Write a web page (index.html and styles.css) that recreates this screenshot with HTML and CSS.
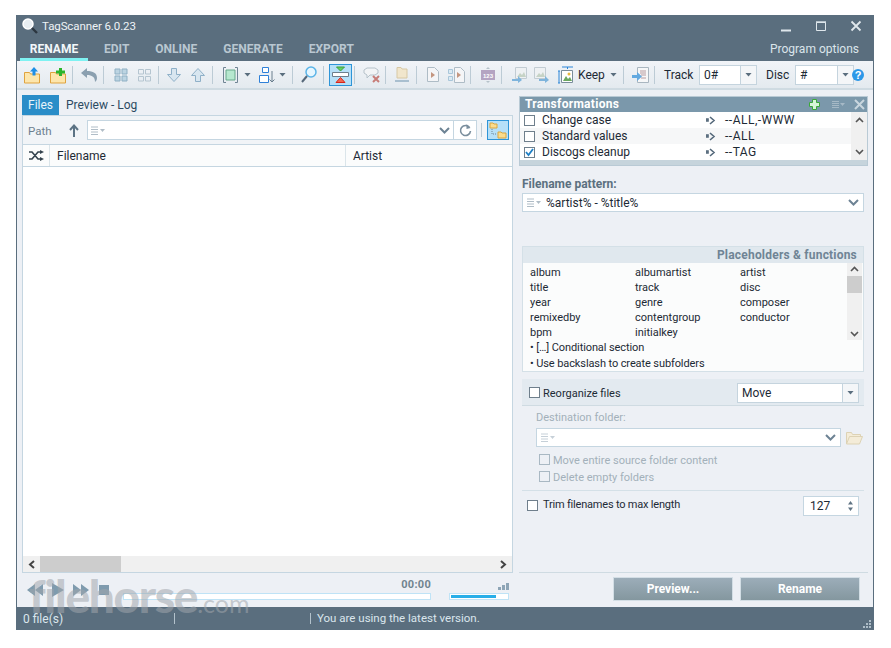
FILE: index.html
```html
<!DOCTYPE html>
<html lang="en">
<head>
<meta charset="utf-8">
<title>TagScanner 6.0.23</title>
<link rel="stylesheet" href="styles.css">
</head>
<body>
<div class="window">
  <header class="head">
    <div class="titlebar">
      <svg class="logo" width="22" height="20" viewBox="0 0 22 20"><circle cx="8" cy="8" r="5" fill="#e8eef2" stroke="#fff" stroke-width="1.5"/><path d="M12 12l5 5" stroke="#2b3640" stroke-width="2.4"/></svg>
      <span class="apptitle">TagScanner 6.0.23</span>
      <div class="winctl">
        <svg width="12" height="12" viewBox="0 0 12 12"><path d="M1 10.5h10" stroke="#dfe7ec" stroke-width="2"/></svg>
        <svg width="12" height="12" viewBox="0 0 12 12"><path d="M1.5 2.5h9v8h-9z" fill="none" stroke="#dfe7ec"/><path d="M1 2h10" stroke="#dfe7ec" stroke-width="1.4"/></svg>
        <svg width="12" height="12" viewBox="0 0 12 12"><path d="M1.5 1.5l9 9m0-9l-9 9" stroke="#dfe7ec" stroke-width="1.8"/></svg>
      </div>
    </div>
    <nav class="tabs">
      <span class="tab active">RENAME</span>
      <span class="tab">EDIT</span>
      <span class="tab">ONLINE</span>
      <span class="tab">GENERATE</span>
      <span class="tab">EXPORT</span>
      <span class="options">Program options</span>
    </nav>
  </header>

  <div class="toolbar">
    <svg class="m0" width="16" height="18" viewBox="0 0 16 18"><path d="M.5 6.5h5l1 1.500h9v9h-15z" fill="#fde6ac" stroke="#dfa33e"/><path d="M10 1l4 4.500h-2.500v4h-3v-4H6z" fill="#1f8fe6"/></svg>
    <svg class="m10" width="16" height="18" viewBox="0 0 16 18"><path d="M.5 6.500h5l1 1.500h9v9h-15z" fill="#fde6ac" stroke="#dfa33e"/><path d="M9 2h3v2.500h3v3h-3v2.500H9V7.500H6v-3h3z" fill="#2cb52c"/></svg>
    <i class="sep m6"></i>
    <svg class="m8" width="16" height="16" viewBox="0 0 16 16"><path d="M0 6l6-5v3c6 0 10 2 10 7 0 2-1 3-2 4 0-5-3-7-8-7v3z" fill="#8ba0b0"/></svg>
    <i class="sep m6"></i>
    <svg class="m10" width="14" height="14" viewBox="0 0 14 14"><path d="M1 1h5v5H1zM8 1h5v5H8zM1 8h5v5H1zM8 8h5v5H8z" fill="#bcd4e2" stroke="#8fb0c4"/></svg>
    <svg class="m10" width="13" height="14" viewBox="0 0 13 14"><path d="M.5 1.500h5v4.500h-5zM7.500 1.500h5v4.500h-5zM.5 8.500h5v4.500h-5zM7.500 8.500h5v4.500h-5z" fill="none" stroke="#b5c5d0"/></svg>
    <i class="sep m7"></i>
    <svg class="m8" width="14" height="14" viewBox="0 0 14 14"><path d="M4.500.5h5v6h4L7 13.500.5 6.500h4z" fill="#d8e6f0" stroke="#8fb0c8"/></svg>
    <svg class="m10" width="14" height="14" viewBox="0 0 14 14"><path d="M4.500 13.500h5v-6h4L7 .5.500 7.500h4z" fill="#d8e6f0" stroke="#8fb0c8"/></svg>
    <i class="sep m7"></i>
    <svg class="m10" width="15" height="16" viewBox="0 0 15 16"><path d="M3 .5H.5v15H3M12 .5h2.500v15H12" fill="none" stroke="#708494"/><path d="M3 3h9v10H3z" fill="#b6e8cf" stroke="#68a88c"/></svg>
    <i class="caret m6"></i>
    <svg class="m8" width="16" height="18" viewBox="0 0 16 18"><path d="M3.500 1.500h6v5h-6zM.5 9.500h9v7h-9z" fill="#fff" stroke="#2f80d8"/><path d="M13 5v11m-2.500-2.500L13 16l2.500-2.500" fill="none" stroke="#6a7e8e"/></svg>
    <i class="caret m4"></i>
    <i class="sep m6"></i>
    <svg class="m8" width="16" height="17" viewBox="0 0 16 17"><circle cx="10" cy="6" r="5" fill="#e6f6ff" stroke="#5ab4e8" stroke-width="1.500"/><path d="M6 10l-5 6" stroke="#56687a" stroke-width="2"/></svg>
    <i class="sep m6"></i>
    <span class="tbactive m5"><svg width="17" height="18" viewBox="0 0 17 18"><path d="M4.500 1h8l-4 4z" fill="#63d35f" stroke="#3e9d3c"/><path d="M.5 6.500h16v4h-16z" fill="#fff" stroke="#6d7f8d"/><path d="M8.500 11.500l4.500 5H4z" fill="#f06a55" stroke="#d8251a"/></svg></span>
    <i class="sep m2"></i>
    <svg class="m8" width="17" height="16" viewBox="0 0 17 16"><path d="M1 3l3-2h8l3 2v3l-3 2H7l-3 3V8L1 6z" fill="#f2f4f6" stroke="#b6c2ca"/><path d="M10 9l6 6m0-6l-6 6" stroke="#c77d78" stroke-width="2"/></svg>
    <i class="sep m5"></i>
    <svg class="m8" width="16" height="17" viewBox="0 0 16 17"><path d="M3 1.500h4l1 1.500h5v9H3z" fill="#f1e6cc" stroke="#d7c8a4"/><path d="M1 15h14" stroke="#a9bfcf" stroke-width="2"/></svg>
    <i class="sep m6"></i>
    <svg class="m10" width="12" height="15" viewBox="0 0 12 15"><path d="M.5.500h7l4 4v10h-11z" fill="#f4f5f7" stroke="#aebcc6"/><path d="M4 5l4 3-4 3z" fill="#c49680"/></svg>
    <svg class="m9" width="17" height="16" viewBox="0 0 17 16"><path d="M.5 2.500h4v4h-4zM.5 9.500h4v4h-4z" fill="#dbeaf3" stroke="#a9c6da"/><path d="M6.500.500h6l4 4v11h-10z" fill="#f4f5f7" stroke="#aebcc6"/><path d="M9 5l4 3-4 3z" fill="#c49680"/></svg>
    <i class="sep m5"></i>
    <svg class="m9" width="16" height="16" viewBox="0 0 16 16"><path d="M1 3h14v10H1z" fill="#b4a4c2"/><path d="M8 0l2 2H6zM8 16l-2-2h4z" fill="#b6c2ca"/><text class="num" x="8" y="10.500">123</text></svg>
    <i class="sep m5"></i>
    <svg class="m10" width="15" height="16" viewBox="0 0 15 16"><path d="M3.500.5h11v11h-11z" fill="#eef1f3" stroke="#c2ccd3"/><path d="M5 10l3-4 2 2 2-3 2 5z" fill="#c6d3c6"/><path d="M0 12h6V9l4 4-4 3v-2H0z" fill="#7eb4dc"/></svg>
    <svg class="m7" width="15" height="16" viewBox="0 0 15 16"><path d="M.5.5h11v11H.5z" fill="#eef1f3" stroke="#c2ccd3"/><path d="M2 10l3-4 2 2 2-3 2 5z" fill="#c6d3c6"/><path d="M5 12h6V9l4 4-4 3v-2H5z" fill="#7eb4dc"/></svg>
    <svg class="m9" width="15" height="18" viewBox="0 0 15 18"><path d="M4 1h11M9.500 1v2M1 5v12M0 5h2M0 17h2" fill="none" stroke="#2c86d8"/><path d="M3.500 4.500h11v12h-11z" fill="#fff" stroke="#7a8d9b"/><path d="M5 15l3-5 2 3 2-2 2 4z" fill="#6ba860"/><circle cx="11" cy="8" r="1.500" fill="#e8b840"/></svg>
    <span class="tbtext keep m5">Keep</span>
    <i class="caret m6"></i>
    <i class="sep m6"></i>
    <svg class="m8" width="17" height="16" viewBox="0 0 17 16"><path d="M5.500.500h11v15h-11z" fill="#f6f7f8" stroke="#a9b6c0"/><path d="M8 4h6M8 6h6M9 8h5M9 11h5" stroke="#b89ca0"/><path d="M0 8h5V5l5 4.500L5 14v-3H0z" fill="#62a9e0"/></svg>
    <i class="sep m5"></i>
    <span class="tbtext tracklabel m9">Track</span>
    <span class="combo track m7"><span class="cbval">0#</span><span class="cbbtn"><i class="caret"></i></span></span>
    <span class="tbtext disclabel m9">Disc</span>
    <span class="combo disc m7"><span class="cbval">#</span><span class="cbbtn"><i class="caret"></i></span></span>
    <svg class="help" width="12" height="14" viewBox="0 0 12 14"><circle cx="6" cy="7" r="6" fill="#2c98e8"/><text class="q" x="6" y="11">?</text></svg>
  </div>

  <main class="main">
    <section class="left">
      <div class="ltabs"><span class="ltab on">Files</span><span class="ltab">Preview - Log</span></div>
      <div class="filepanel">
        <div class="pathrow">
          <span class="pathlabel">Path</span>
          <svg class="uparrow" width="10" height="13" viewBox="0 0 10 13"><path d="M5 13V2M1 6l4-4.500L9 6" fill="none" stroke="#5c7384" stroke-width="2"/></svg>
          <div class="pathinput">
            <svg class="listic" width="15" height="9" viewBox="0 0 15 9"><path d="M0 1h7M0 3.500h7M0 6h7M0 8.500h7" stroke="#b0bdc7"/><path d="M9 3h5l-2.500 3z" fill="#b0bdc7"/></svg>
            <span class="grow"></span>
            <svg class="chev" width="11" height="7" viewBox="0 0 11 7"><path d="M1 1l4.500 4.500L10 1" fill="none" stroke="#6d8394" stroke-width="2"/></svg>
            <span class="refresh"><svg width="13" height="13" viewBox="0 0 13 13"><path d="M10.500 3.500a5 5 0 1 0 1 3.500" fill="none" stroke="#7a8e9d" stroke-width="1.600"/><path d="M7.500 0v5l4-1z" fill="#7a8e9d"/></svg></span>
          </div>
          <i class="sep pathsep"></i>
          <span class="foldertoggle"><svg width="18" height="17" viewBox="0 0 18 17"><path d="M1 1h3l1 1h3v4H1zM9 10h3l1 1h4v5H9z" fill="#fbdc8d" stroke="#d9a63e"/><path d="M3 7v5h5" fill="none" stroke="#6c8494" stroke-dasharray="1 1"/></svg></span>
        </div>
        <div class="colhead">
          <span class="colshuffle"><svg width="15" height="11" viewBox="0 0 15 11"><path d="M0 2h3l6 7h3M0 9h3l6-7h3" fill="none" stroke="#34434e" stroke-width="1.600"/><path d="M11 0l4 2-4 2zM11 7l4 2-4 2z" fill="#34434e"/></svg></span>
          <span class="colname">Filename</span>
          <span class="colartist">Artist</span>
        </div>
        <div class="filelist"></div>
        <div class="hscroll">
          <span class="sbtn"><svg width="7" height="9" viewBox="0 0 7 9"><path d="M6 1L2 4.500 6 8" fill="none" stroke="#444" stroke-width="2"/></svg></span>
          <span class="thumb"></span>
          <span class="grow"></span>
          <span class="sbtn"><svg width="7" height="9" viewBox="0 0 7 9"><path d="M1 1l4 3.500L1 8" fill="none" stroke="#444" stroke-width="2"/></svg></span>
        </div>
      </div>
      <div class="player">
        <div class="transport">
          <svg width="16" height="12" viewBox="0 0 16 12"><path d="M8 0v12L0 6zM16 0v12L8 6z" fill="#7f9bae"/></svg>
          <svg class="t1" width="12" height="14" viewBox="0 0 12 14"><path d="M0 0l12 7-12 7z" fill="#7f9bae"/></svg>
          <svg class="t2" width="16" height="12" viewBox="0 0 16 12"><path d="M0 0l8 6-8 6zM8 0l8 6-8 6z" fill="#7f9bae"/></svg>
          <svg class="t3" width="10" height="10" viewBox="0 0 10 10"><path d="M0 0h10v10H0z" fill="#7f9bae"/></svg>
        </div>
        <div class="trackbox">
          <span class="time">00:00</span>
          <span class="seek"></span>
        </div>
        <div class="volbox">
          <svg class="signal" width="11" height="7" viewBox="0 0 11 7"><path d="M0 4h3v3H0zM4 2h3v5H4zM8 0h3v7H8z" fill="#8ea5b6"/></svg>
          <span class="vol"><span class="volfill"></span></span>
        </div>
      </div>
    </section>

    <section class="right">
      <div class="transform">
        <div class="trhead">
          <span class="trtitle">Transformations</span>
          <svg class="plus" width="11" height="11" viewBox="0 0 11 11"><path d="M3.500.5h4v3h3v4h-3v3h-4v-3h-3v-4h3z" fill="#d8f5d8" stroke="#3aa83a"/></svg>
          <svg class="trlist" width="13" height="8" viewBox="0 0 13 8"><path d="M0 .5h7M0 2.500h7M0 4.500h7M0 6.500h7" stroke="#a6b9c6"/><path d="M8 2h5l-2.500 3z" fill="#a6b9c6"/></svg>
          <svg class="trx" width="11" height="11" viewBox="0 0 11 11"><path d="M1 1l9 9m0-9l-9 9" stroke="#c9d6de" stroke-width="2"/></svg>
        </div>
        <div class="trbody">
          <div class="trrows">
            <div class="trrow"><i class="check"></i><span class="trname">Change case</span><svg class="go" width="10" height="9" viewBox="0 0 10 9"><path d="M0 3h2v2H0zM4 1l4 3.500L4 8" fill="none" stroke="#54687a" stroke-width="1.600"/></svg><span class="trval">--ALL,-WWW</span></div>
            <div class="trrow alt"><i class="check"></i><span class="trname">Standard values</span><svg class="go" width="10" height="9" viewBox="0 0 10 9"><path d="M0 3h2v2H0zM4 1l4 3.500L4 8" fill="none" stroke="#54687a" stroke-width="1.600"/></svg><span class="trval">--ALL</span></div>
            <div class="trrow"><i class="check"><svg width="11" height="11" viewBox="0 0 11 11"><path d="M2 5l2.500 3L9 2" fill="none" stroke="#1f7fc4" stroke-width="1.800"/></svg></i><span class="trname">Discogs cleanup</span><svg class="go" width="10" height="9" viewBox="0 0 10 9"><path d="M0 3h2v2H0zM4 1l4 3.500L4 8" fill="none" stroke="#54687a" stroke-width="1.600"/></svg><span class="trval">--TAG</span></div>
          </div>
          <div class="vscroll short">
            <svg width="9" height="7" viewBox="0 0 9 7"><path d="M1 5l3.500-3.500L8 5" fill="none" stroke="#555" stroke-width="1.600"/></svg>
            <svg width="9" height="7" viewBox="0 0 9 7"><path d="M1 2l3.500 3.500L8 2" fill="none" stroke="#555" stroke-width="1.600"/></svg>
          </div>
        </div>
        <div class="trfoot"></div>
      </div>

      <label class="fplabel">Filename pattern:</label>
      <div class="pattern">
        <svg class="listic" width="15" height="9" viewBox="0 0 15 9"><path d="M0 1h7M0 3.500h7M0 6h7M0 8.500h7" stroke="#b0bdc7"/><path d="M9 3h5l-2.500 3z" fill="#b0bdc7"/></svg>
        <span class="grow patval">%artist% - %title%</span>
        <svg width="11" height="7" viewBox="0 0 11 7"><path d="M1 1l4.500 4.500L10 1" fill="none" stroke="#6d8394" stroke-width="2"/></svg>
      </div>

      <div class="places">
        <div class="plhead">Placeholders &amp; functions</div>
        <div class="plbody">
          <div class="plgrid">
            <span>album</span><span>albumartist</span><span>artist</span>
            <span>title</span><span>track</span><span>disc</span>
            <span>year</span><span>genre</span><span>composer</span>
            <span>remixedby</span><span>contentgroup</span><span>conductor</span>
            <span>bpm</span><span>initialkey</span><span></span>
          </div>
          <div class="vscroll tall">
            <svg width="9" height="7" viewBox="0 0 9 7"><path d="M1 5l3.500-3.500L8 5" fill="none" stroke="#555" stroke-width="1.600"/></svg>
            <span class="vthumb"></span>
            <span class="grow"></span>
            <svg width="9" height="7" viewBox="0 0 9 7"><path d="M1 2l3.500 3.500L8 2" fill="none" stroke="#555" stroke-width="1.600"/></svg>
          </div>
        </div>
        <div class="note">• […] Conditional section</div>
        <div class="note">• Use backslash to create subfolders</div>
      </div>

      <div class="reorg">
        <i class="check"></i><span class="grow reorgtext">Reorganize files</span>
        <span class="combo move"><span class="cbval">Move</span><span class="cbbtn"><i class="caret"></i></span></span>
      </div>
      <div class="dest">
        <div class="destlabel">Destination folder:</div>
        <div class="destrow">
          <div class="destinput">
            <svg width="15" height="9" viewBox="0 0 15 9"><path d="M0 1h7M0 3.500h7M0 6h7M0 8.500h7" stroke="#c6d0d8"/><path d="M9 3h5l-2.500 3z" fill="#c6d0d8"/></svg>
            <span class="grow"></span>
            <svg width="11" height="7" viewBox="0 0 11 7"><path d="M1 1l4.500 4.500L10 1" fill="none" stroke="#6d8394" stroke-width="2"/></svg>
          </div>
          <svg class="destfolder" width="17" height="14" viewBox="0 0 17 14"><path d="M.5 13V1.500h5l1 2h8v2" fill="#f4ecd8" stroke="#ddd2b4"/><path d="M.5 13l3-7.500h13l-3 7.500z" fill="#f4ecd8" stroke="#ddd2b4"/></svg>
        </div>
        <div class="destopt o1"><i class="check dim"></i><span>Move entire source folder content</span></div>
        <div class="destopt o2"><i class="check dim"></i><span>Delete empty folders</span></div>
      </div>
      <div class="trim">
        <i class="check"></i><span class="grow trimtext">Trim filenames to max length</span>
        <span class="spin"><span class="grow">127</span><svg width="7" height="12" viewBox="0 0 7 12"><path d="M3.500 1L6 4.500H1zM3.500 11L1 7.500h5z" fill="#5f7383"/></svg></span>
      </div>
      <div class="grow"></div>
      <div class="actions">
        <span class="action">Preview...</span>
        <span class="action">Rename</span>
      </div>
    </section>
  </main>

  <footer class="status">
    <span class="st1">0 file(s)</span>
    <span class="st2"></span>
    <span class="st3">You are using the latest version.</span>
    <svg class="grip" width="9" height="9" viewBox="0 0 9 9"><path d="M7 0h2v2H7zM4 3h2v2H4zM7 3h2v2H7zM1 6h2v2H1zM4 6h2v2H4zM7 6h2v2H7z" fill="#aebdc8"/></svg>
  </footer>

  <div class="watermark">filehorse<small>.com</small></div>
</div>
</body>
</html>
```
FILE: styles.css
```css
* { box-sizing: border-box; }
html, body { margin: 0; padding: 0; background: #fff; }
body { padding: 15px 17px 18px 16px; font: 12px/16px Roboto, "Noto Sans", sans-serif; color: #1d2a35; }
svg { display: block; flex: none; }
i { font-style: normal; display: block; flex: none; }
.grow { flex: 1 1 0; min-width: 0; }

.window { position: relative; width: 858px; height: 615px; display: flex; flex-direction: column; background: #edf0f5; border-left: 1px solid #5a6e7e; border-right: 1px solid #5a6e7e; overflow: hidden; }

.head { background: #5a6e7e; color: #fff; height: 46px; flex: none; }
.titlebar { display: flex; align-items: center; height: 22px; padding-left: 3px; }
.apptitle { color: #eef3f6; font-size: 11.500px; letter-spacing: -0.1px; }
.winctl { margin-left: auto; display: flex; gap: 23px; padding-right: 11px; }
.tabs { display: flex; height: 24px; position: relative; }
.tab { font-weight: 700; color: #b9c7d1; padding: 4px 0 0; margin-left: 26px; }
.tab.active { color: #f2f7fa; margin-left: 3px; padding: 4px 0 0; border-bottom: 3px solid #7ff2f2; width: 68px; text-align: center; }
.tab.active + .tab { margin-left: 16px; }
.options { margin-left: auto; margin-right: 14px; color: #dbe5eb; padding-top: 4px; }

.toolbar { height: 29px; flex: none; display: flex; align-items: center; padding-left: 7px; background: linear-gradient(#f1f4f8, #e4eaef); border-bottom: 2px solid #cfdbe2; }
.sep { width: 1px; height: 18px; background: #bccbd5; }
.m0 { margin-left: 0; } .m2 { margin-left: 2px; } .m4 { margin-left: 4px; } .m5 { margin-left: 5px; } .m6 { margin-left: 6px; } .m7 { margin-left: 7px; } .m8 { margin-left: 8px; } .m9 { margin-left: 9px; } .m10 { margin-left: 10px; }
.caret { width: 7px; height: 4px; background: #5a6e7e; clip-path: polygon(0 0, 100% 0, 50% 100%); }
.tbactive { width: 23px; height: 22px; background: #b6e0f8; border: 1px solid #2e95d8; display: flex; align-items: center; justify-content: center; flex: none; }
.tbtext { flex: none; color: #1d2a35; }
.keep { width: 26px; }
.tracklabel { width: 28px; }
.disclabel { width: 22px; }
.num { font: 700 6px "Liberation Sans", sans-serif; fill: #fff; text-anchor: middle; }
.q { font: 700 11px "Liberation Sans", sans-serif; fill: #fff; text-anchor: middle; }
.combo { display: flex; height: 20px; background: #fff; border: 1px solid #c5d4de; flex: none; }
.cbval { flex: 1; padding-left: 4px; line-height: 18px; }
.cbbtn { width: 16px; border-left: 1px solid #c5d4de; background: #f4f6f8; display: flex; align-items: center; justify-content: center; }
.track { width: 58px; }
.disc { width: 59px; }
.move { width: 122px; }
.help { margin-left: -2px; position: relative; }

.main { flex: 1; display: flex; min-height: 0; }
.left { width: 491px; margin-left: 5px; padding-top: 5px; display: flex; flex-direction: column; flex: none; }
.ltabs { display: flex; height: 20px; flex: none; }
.ltab { padding: 2px 7px 0; color: #2c4a62; }
.ltab.on { background: #2a8dc8; color: #e8f4fb; padding: 2px 6px 0; }
.filepanel { flex: 1; display: flex; flex-direction: column; border: 1px solid #c5d6e1; min-height: 0; }
.pathrow { height: 29px; display: flex; align-items: center; background: #f1f4f7; border-bottom: 1px solid #c5d6e1; padding-left: 5px; flex: none; }
.pathlabel { color: #6c808f; width: 41px; font-size: 11.500px; padding-top: 1px; }
.uparrow { margin-right: 8px; }
.pathinput { width: 390px; height: 20px; display: flex; align-items: center; background: #fff; border: 1px solid #c5d6e1; padding-left: 3px; }
.chev { margin-right: 3px; }
.refresh { width: 23px; height: 18px; border-left: 1px solid #c5d6e1; display: flex; align-items: center; justify-content: center; }
.pathsep { margin-left: 4px; height: 14px; }
.foldertoggle { width: 22px; height: 20px; margin-left: 5px; background: #b6e0f8; border: 1px solid #2e95d8; display: flex; align-items: center; justify-content: center; }
.colhead { height: 22px; flex: none; display: flex; align-items: center; background: #fbfcfc; border-bottom: 1px solid #c5d6e1; }
.colshuffle { width: 27px; height: 21px; border-right: 1px solid #dbe5ea; display: flex; align-items: center; justify-content: center; }
.colname { width: 296px; padding-left: 7px; height: 21px; line-height: 22px; border-right: 1px solid #dbe5ea; }
.colartist { padding-left: 7px; }
.filelist { flex: 1; background: #fff; }
.hscroll { height: 16px; flex: none; display: flex; background: #f0f0f0; align-items: stretch; }
.sbtn { width: 17px; display: flex; align-items: center; justify-content: center; }
.thumb { width: 81px; background: #cdcdcd; }

.player { height: 34px; flex: none; display: flex; position: relative; }
.transport { display: flex; align-items: center; padding-left: 5px; height: 34px; width: 101px; }
.t1 { margin-left: 9px; }
.t2 { margin-left: 9px; }
.t3 { margin-left: 10px; }
.trackbox { width: 308px; display: flex; flex-direction: column; align-items: flex-end; padding-top: 5px; }
.time { font-weight: 700; font-size: 11px; line-height: 14px; letter-spacing: 0.3px; color: #71848f; }
.seek { display: block; width: 100%; height: 7px; margin-top: 1px; background: #fff; border: 1px solid #bfe3f6; }
.volbox { width: 60px; margin-left: 18px; display: flex; flex-direction: column; align-items: flex-end; padding-top: 10px; }
.signal { margin-bottom: 3px; }
.vol { display: block; width: 100%; height: 7px; background: #fff; border: 1px solid #bfe3f6; padding: 1px; }
.volfill { display: block; width: 45px; height: 3px; background: #27aee8; }

.right { width: 349px; margin-left: 6px; flex: none; display: flex; flex-direction: column; padding-top: 6px; }
.transform { height: 70px; flex: none; border: 1px solid #b9cad5; display: flex; flex-direction: column; background: #c6d4dc; }
.trhead { height: 15px; background: #7b98ab; color: #fff; display: flex; align-items: center; padding-left: 5px; flex: none; }
.trtitle { font-weight: 700; flex: 1; letter-spacing: 0.3px; margin-top: -1px; }
.plus { margin-right: 12px; }
.trlist { margin-right: 9px; }
.trx { margin-right: 2px; }
.trbody { display: flex; height: 48px; background: #fff; flex: none; }
.trrows { flex: 1; }
.trrow { height: 16px; display: flex; align-items: center; padding-left: 4px; background: #fff; }
.trrow.alt { background: #f6f7f8; }
.trname { width: 164px; margin-left: 7px; }
.trval { letter-spacing: 0.5px; }
.go { margin-right: 9px; }
.check { width: 11px; height: 11px; background: #fff; border: 1px solid #6f7f8c; }
.check svg { margin: -1px; }
.check.dim { border-color: #a9b8c3; background: transparent; }
.vscroll { width: 16px; background: #f0f0f0; display: flex; flex-direction: column; align-items: center; justify-content: space-between; padding: 5px 0; flex: none; }
.trfoot { flex: 1; }

.fplabel { margin: 10px 0 0 3px; font-weight: 700; color: #5c7080; height: 16px; display: block; }
.pattern { margin: 1px 4px 0 3px; height: 19px; background: #fff; border: 1px solid #c5d6e1; display: flex; align-items: center; padding: 0 4px; flex: none; }
.patval { padding-left: 4px; }

.places { margin: 34px 4px 0 3px; height: 126px; border: 1px solid #d4e0e7; background: #fbfcfc; flex: none; font-size: 11px; }
.plhead { height: 16px; background: #e0e8ee; color: #6f8495; font-size: 12px; font-weight: 700; text-align: right; padding-right: 6px; line-height: 16px; letter-spacing: 0.2px; }
.plbody { display: flex; height: 77px; }
.plgrid { flex: 1; display: grid; grid-template-columns: 105px 105px 1fr; grid-auto-rows: 15px; padding: 2px 0 0 7px; line-height: 15px; }
.vscroll.tall { height: 77px; width: 15px; padding: 3px 0; margin-right: 1px; }
.vthumb { width: 15px; height: 17px; background: #cdcdcd; margin-top: 3px; }
.note { padding-left: 7px; height: 16px; line-height: 16px; letter-spacing: -0.1px; }

.reorg { margin: 7px 4px 0 3px; height: 27px; background: #e3eaf0; border-bottom: 1px solid #cfdbe2; display: flex; align-items: center; padding: 1px 5px 0 7px; flex: none; }
.reorgtext { padding: 2px 0 0 3px; font-size: 11px; }
.dest { margin-left: 17px; margin-right: 4px; padding-top: 3px; height: 84px; flex: none; color: #a3b0ba; font-size: 11px; }
.destlabel { height: 16px; padding-top: 1px; }
.destrow { display: flex; align-items: center; margin-top: 3px; }
.destinput { width: 305px; height: 19px; background: #fff; border: 1px solid #c5d6e1; display: flex; align-items: center; padding: 0 4px; }
.destfolder { margin-left: 5px; }
.destopt { display: flex; align-items: center; padding-left: 3px; height: 17px; }
.destopt span { padding: 2px 0 0 3px; }
.o1 { margin-top: 4px; }
.trim { margin: 0 4px 0 3px; padding: 4px 5px 0 5px; height: 26px; border-top: 1px solid #d4e0e7; display: flex; align-items: center; flex: none; }
.trimtext { padding-left: 5px; font-size: 11px; letter-spacing: -0.2px; line-height: 14px; margin-top: -2px; }
.spin { width: 56px; height: 20px; background: #fff; border: 1px solid #c5d6e1; display: flex; align-items: center; padding: 0 4px 0 6px; }

.actions { height: 35px; flex: none; border-top: 1px solid #cfdbe2; display: flex; justify-content: flex-end; gap: 7px; padding: 4px 8px 0 0; }
.action { width: 120px; height: 24px; text-align: center; line-height: 23px; font-weight: 700; color: #fff; background: linear-gradient(#9cadb9, #84979f); border: 1px solid #d3dee5; }

.status { height: 23px; flex: none; display: flex; align-items: center; background: #5a6e7e; color: #dbe6ed; position: relative; }
.st1 { width: 157px; padding-left: 6px; }
.st2 { width: 136px; height: 11px; border-left: 1px solid #b3c2cc; }
.st3 { border-left: 1px solid #b3c2cc; padding-left: 6px; line-height: 11px; font-size: 11.500px; }
.grip { position: absolute; right: 2px; bottom: 1px; }

.watermark { position: absolute; left: 12px; top: 553px; font: 900 46px/56px "Lato", "Noto Sans", sans-serif; letter-spacing: -1.300px; color: rgba(160, 166, 172, 0.55); pointer-events: none; }
.watermark small { font-size: 25px; font-weight: 400; letter-spacing: 0; }
```
